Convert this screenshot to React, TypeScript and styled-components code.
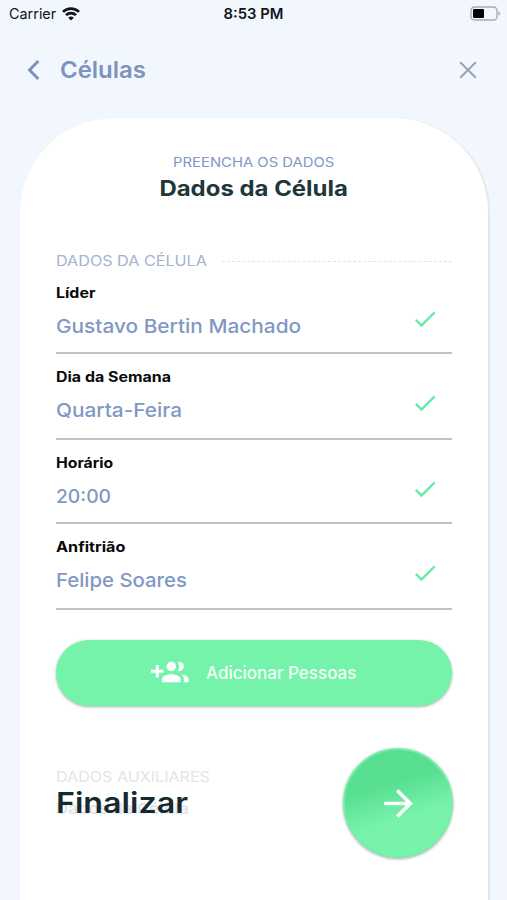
import React from 'react';
import styled, { createGlobalStyle } from 'styled-components';
import { MdArrowForward, MdCheck } from 'react-icons/md';

const GlobalStyle = createGlobalStyle`
  * { box-sizing: border-box; }
  body { margin: 0; background: #f2f7fe; font-family: Inter, "Open Sans", sans-serif; }
  button { font: inherit; border: 0; padding: 0; background: none; }
`;

const Screen = styled.main`
  width: 507px;
  height: 900px;
  overflow: hidden;
  display: flex;
  flex-direction: column;
  background: #f2f7fe;
`;

const StatusBar = styled.header`
  display: grid;
  grid-template-columns: 1fr auto 1fr;
  align-items: center;
  height: 27px;
  padding: 0 6px 0 9px;
  color: #111418;
  svg { display: block; }
`;

const Carrier = styled.div`
  display: flex;
  align-items: center;
  gap: 6px;
  font-size: 14.4px;
`;

const Clock = styled.div`
  margin-right: 3px;
  font-size: 14.8px;
  font-weight: 600;
`;

const Battery = styled.div`
  justify-self: end;
`;

const Wide = styled.span<{ $x: number; $center?: boolean }>`
  display: inline-block;
  white-space: nowrap;
  transform: scaleX(${(p) => p.$x});
  transform-origin: ${(p) => (p.$center ? 'center' : 'left')};
`;

const NavBar = styled.nav`
  display: flex;
  align-items: center;
  height: 85px;
  margin-bottom: 6px;
  padding: 0 30px 0 26px;
`;

const IconButton = styled.button`
  display: flex;
  svg { display: block; }
`;

const NavTitle = styled.h1`
  flex: 1;
  margin: 0 0 0 18px;
  color: #7b93bd;
  font-size: 22.5px;
  font-weight: 600;
  line-height: 30px;
`;

const Card = styled.section`
  flex: 1;
  margin: 0 19px 0 20px;
  padding: 34px 36px 0;
  background: #fff;
  border-radius: 94px 94px 0 0;
  box-shadow: 1px 1px 1px 0.5px #e2e8ed;
`;

const CardHeader = styled.header`
  display: flex;
  flex-direction: column;
  align-items: center;
  height: 99px;
`;

const Eyebrow = styled.div`
  color: #8196c2;
  font-size: 13px;
  line-height: 21px;
`;

const CardTitle = styled.h2`
  margin: 2px 0 0;
  color: #20363b;
  font-size: 21px;
  font-weight: 700;
  line-height: 28px;
`;

const SectionTitle = styled.div`
  display: grid;
  grid-template-columns: 151px 1fr;
  column-gap: 15px;
  align-items: center;
  height: 19px;
  color: #a4b3d0;
  font-size: 13.8px;
  line-height: 21px;
`;

const DashedRule = styled.div`
  border-top: 1px dashed #e2e4e7;
`;

const Field = styled.div<{ $height: number }>`
  display: flex;
  justify-content: space-between;
  height: ${(p) => p.$height}px;
  padding-top: 13px;
  border-bottom: 2px solid #c0c0c0;
`;

const FieldLabel = styled.div`
  height: 20px;
  color: #090909;
  font-size: 14px;
  font-weight: 700;
  line-height: 20px;
`;

const FieldValue = styled.div`
  height: 29px;
  margin-top: 9px;
  color: #7f98c4;
  font-size: 19px;
  font-weight: 500;
  line-height: 29px;
`;

const FieldStatus = styled.div`
  margin: 22px 13px 0 0;
  color: #66ebab;
  font-size: 28px;
  line-height: 0;
`;

const AddButton = styled.button`
  display: flex;
  align-items: center;
  width: 100%;
  height: 66px;
  margin-top: 30px;
  padding-left: 95px;
  gap: 17.5px;
  border-radius: 34px;
  background: #76f3aa;
  box-shadow: 0 1px 3px rgba(40, 70, 55, 0.42);
  color: #fff;
  font-size: 17px;
  font-weight: 500;
  span { color: #f2fff8; }
`;

const Footer = styled.footer`
  display: flex;
  justify-content: space-between;
  height: 110px;
  margin-top: 42px;
`;

const NextStep = styled.div`
  position: relative;
  padding-top: 19px;
  color: #e2e5e9;
  font-size: 14px;
  line-height: 20px;
`;

const NextStepTitle = styled.div`
  margin-top: 12px;
  font-size: 14.8px;
  font-weight: 700;
  line-height: 20px;
`;

const Finish = styled.div`
  position: absolute;
  top: 37px;
  left: 0;
  color: #162a2d;
  font-size: 29px;
  font-weight: 600;
  line-height: 36px;
`;

const NextButton = styled.button`
  display: flex;
  align-items: center;
  justify-content: center;
  width: 110px;
  height: 110px;
  margin-right: -1px;
  border: 2px solid #76edaa;
  border-radius: 50%;
  background: linear-gradient(163deg, #58de90 0%, #58df91 34%, #76f2aa 61%, #78f4ab 100%);
  box-shadow: 0 1px 3px rgba(40, 50, 45, 0.45);
  color: #fff;
  font-size: 43px;
`;

type FieldData = { label: string; value: string; height: number; labelScale: number; valueScale: number };

const fields: FieldData[] = [
  { label: 'Líder', value: 'Gustavo Bertin Machado', height: 84, labelScale: 1.14, valueScale: 1.096 },
  { label: 'Dia da Semana', value: 'Quarta-Feira', height: 86, labelScale: 1.14, valueScale: 1.094 },
  { label: 'Horário', value: '20:00', height: 84, labelScale: 1.125, valueScale: 1.014 },
  { label: 'Anfitrião', value: 'Felipe Soares', height: 86, labelScale: 1.155, valueScale: 1.071 },
];

const WifiIcon = () => (
  <svg width="18" height="14" viewBox="0 0 18 14" fill="none" stroke="#111418" strokeWidth="2.7">
    <path d="M1 4.9a11.4 11.4 0 0 1 16 0M4 8.1a7.1 7.1 0 0 1 10 0" />
    <path d="M9 13.6 6.2 10.8a4 4 0 0 1 5.6 0Z" fill="#111418" stroke="none" />
  </svg>
);

const BatteryIcon = () => (
  <svg width="31" height="15" viewBox="0 0 31 15">
    <rect x="1" y="1" width="26" height="13" rx="3.6" fill="none" stroke="#a9adb2" strokeWidth="1.4" />
    <rect x="3" y="3" width="11" height="9" rx="1.3" fill="#000" />
    <path d="M28.4 5.3v4.4q1.8-.8 1.8-2.2t-1.8-2.2" fill="#a9adb2" />
  </svg>
);

const BackIcon = () => (
  <svg width="16" height="24" viewBox="0 0 16 24" fill="none" stroke="#7b93bd" strokeWidth="3">
    <path d="M12.3 3 3.6 12l8.7 9" />
  </svg>
);

const CloseIcon = () => (
  <svg width="18" height="18" viewBox="0 0 18 18" fill="none" stroke="#9ba3b3" strokeWidth="2" strokeLinecap="round">
    <path d="m1.7 1.7 14.6 14.6M16.3 1.7 1.7 16.3" />
  </svg>
);

const GroupAddIcon = () => (
  <svg width="37.5" height="37.5" viewBox="0 0 24 24" fill="currentColor">
    <path d="M8 10H5V7H3v3H0v2h3v3h2v-3h3v-2zm10 1c1.66 0 2.99-1.34 2.99-3S19.66 5 18 5c-.32 0-.63.05-.91.14.57.81.9 1.79.9 2.86s-.34 2.04-.9 2.86c.28.09.59.14.91.14zm-5 0c1.66 0 2.99-1.34 2.99-3S14.66 5 13 5c-1.66 0-3 1.34-3 3s1.34 3 3 3zm6.62 2.16c.83.73 1.38 1.66 1.38 2.84v2h3v-2c0-1.54-2.37-2.49-4.38-2.84zM13 13c-2 0-6 1-6 3v2h12v-2c0-2-4-3-6-3z" />
  </svg>
);

export default function App() {
  return (
    <Screen>
      <GlobalStyle />
      <StatusBar>
        <Carrier>Carrier<WifiIcon /></Carrier>
        <Clock>8:53 PM</Clock>
        <Battery><BatteryIcon /></Battery>
      </StatusBar>
      <NavBar>
        <IconButton aria-label="Voltar"><BackIcon /></IconButton>
        <NavTitle><Wide $x={1.065}>Células</Wide></NavTitle>
        <IconButton aria-label="Fechar"><CloseIcon /></IconButton>
      </NavBar>
      <Card>
        <CardHeader>
          <Eyebrow><Wide $x={1.14} $center>PREENCHA OS DADOS</Wide></Eyebrow>
          <CardTitle><Wide $x={1.14} $center>Dados da Célula</Wide></CardTitle>
        </CardHeader>
        <SectionTitle>
          <Wide $x={1.17}>DADOS DA CÉLULA</Wide>
          <DashedRule />
        </SectionTitle>
        {fields.map((f) => (
          <Field key={f.label} $height={f.height}>
            <div>
              <FieldLabel><Wide $x={f.labelScale}>{f.label}</Wide></FieldLabel>
              <FieldValue><Wide $x={f.valueScale}>{f.value}</Wide></FieldValue>
            </div>
            <FieldStatus><MdCheck /></FieldStatus>
          </Field>
        ))}
        <AddButton>
          <GroupAddIcon />
          <span>Adicionar Pessoas</span>
        </AddButton>
        <Footer>
          <NextStep>
            <Wide $x={1.15}>DADOS AUXILIARES</Wide>
            <NextStepTitle><Wide $x={1.14}>Dados da Célula</Wide></NextStepTitle>
            <Finish><Wide $x={1.111}>Finalizar</Wide></Finish>
          </NextStep>
          <NextButton aria-label="Finalizar"><MdArrowForward /></NextButton>
        </Footer>
      </Card>
    </Screen>
  );
}
